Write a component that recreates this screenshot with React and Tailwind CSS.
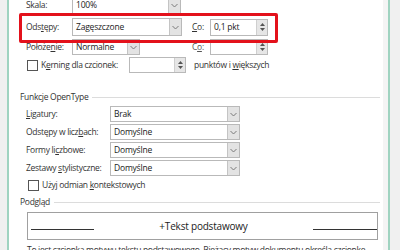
import React from "react";

const font = { fontFamily: "'Open Sans', 'Noto Sans', sans-serif" };

function U({ children }) {
  return <span className="underline underline-offset-1">{children}</span>;
}

function Chevron() {
  return (
    <svg width="7" height="5" viewBox="0 0 7 5" className="text-[#7a7a7a]">
      <path d="M0.5 1 L3.5 4 L6.5 1" fill="none" stroke="currentColor" strokeWidth="1" />
    </svg>
  );
}

function Dropdown({ value, className }) {
  return (
    <div className={`flex shrink-0 border border-[#b9b9b9] bg-white ${className}`}>
      <div className="flex-1 pl-[3px] text-[8.5px] leading-none text-[#222] flex items-center whitespace-nowrap tracking-[-0.2px]">{value}</div>
      <div className="w-[12px] bg-[#e3e3e3] border-l border-[#c4c4c4] flex items-center justify-center">
        <Chevron />
      </div>
    </div>
  );
}

function Spinner({ value, className }) {
  return (
    <div className={`flex shrink-0 border border-[#b9b9b9] bg-white ${className}`}>
      <div className="flex-1 pl-[3px] text-[8.5px] leading-none text-[#222] flex items-center whitespace-nowrap tracking-[-0.2px]">{value}</div>
      <div className="w-[11px] bg-[#e6e6e6] border-l border-[#cfcfcf] flex flex-col items-center justify-center gap-[2px]">
        <svg width="5" height="3" viewBox="0 0 5 3"><path d="M2.5 0 L5 3 L0 3 Z" fill="#555" /></svg>
        <svg width="5" height="3" viewBox="0 0 5 3"><path d="M0 0 L5 0 L2.5 3 Z" fill="#555" /></svg>
      </div>
    </div>
  );
}

function Checkbox() {
  return <div className="w-[11px] h-[11px] border border-[#555] bg-white shrink-0" />;
}

function GroupTitle({ children }) {
  return (
    <div className="flex items-center gap-[4px] pl-[11px] pr-[3px] h-[9px]">
      <span className="text-[8.5px] text-[#333] leading-none whitespace-nowrap tracking-[-0.3px]">{children}</span>
      <div className="flex-1 h-px bg-[#dcdcdc]" />
    </div>
  );
}

const label = "shrink-0 text-[8.5px] leading-none whitespace-nowrap tracking-[-0.3px]";

export default function App() {
  return (
    <div className="w-[400px] h-[250px] overflow-hidden flex bg-[#f0f0f0]" style={font}>
      <div className="w-[7px] shrink-0" />
      <div className="w-[2px] shrink-0 bg-[#9fd3c0]" />
      <div className="relative w-[374px] shrink-0 bg-white text-[#333]">
        {/* top group */}
        <div className="mt-[-3px] pl-[17px]">
          <div className="flex items-center h-[17px]">
            <span className={`w-[46px] ${label}`}>Skala:</span>
            <Dropdown value="100%" className="w-[109px] h-[17px]" />
          </div>
          <div className="flex items-center h-[18px] mt-[4px]">
            <span className={`w-[46px] ${label}`}>Ods<U>t</U>ępy:</span>
            <Dropdown value="Zagęszczone" className="w-[110px] h-[18px]" />
            <span className={`ml-[10px] w-[18px] ${label}`}><U>C</U>o:</span>
            <Spinner value="0,1 pkt" className="w-[58px] h-[17px]" />
          </div>
          <div className="flex items-center h-[16px] mt-[3px]">
            <span className={`w-[46px] ${label}`}>Położe<U>n</U>ie:</span>
            <Dropdown value="Normalne" className="w-[68px] h-[16px]" />
            <span className={`ml-[52px] w-[18px] text-[#555] ${label}`}>C<U>o</U>:</span>
            <Spinner value="" className="w-[58px] h-[16px]" />
          </div>
          <div className="flex items-center h-[16px] mt-[2px] pl-[1px]">
            <Checkbox />
            <span className={`ml-[3px] w-[88px] ${label}`}>K<U>e</U>rning dla czcionek:</span>
            <Spinner value="" className="w-[57px] h-[16px]" />
            <span className={`ml-[8px] ${label}`}>punktów i <U>w</U>iększych</span>
          </div>
        </div>

        {/* OpenType group */}
        <div className="mt-[20px]">
          <GroupTitle>Funkcje OpenType</GroupTitle>
          <div className="pl-[17px] mt-[4px] flex flex-col gap-[2px]">
            {[
              [<><U>L</U>igatury:</>, "Brak"],
              [<>Odstępy w licz<U>b</U>ach:</>, "Domyślne"],
              [<>Formy li<U>c</U>zbowe:</>, "Domyślne"],
              [<>Zestawy <U>s</U>tylistyczne:</>, "Domyślne"],
            ].map(([text, value], i) => (
              <div key={i} className="flex items-center h-[16px]">
                <span className={`w-[84px] ${label}`}>{text}</span>
                <Dropdown value={value} className="w-[130px] h-[16px]" />
              </div>
            ))}
            <div className="flex items-center h-[12px] mt-[1px] pl-[2px]">
              <Checkbox />
              <span className={`ml-[3px] ${label}`}>Użyj odmian <U>k</U>ontekstowych</span>
            </div>
          </div>
        </div>

        {/* preview group */}
        <div className="mt-[7px]">
          <GroupTitle>Podgląd</GroupTitle>
          <div className="ml-[18px] mr-[5px] mt-[5px] h-[28px] border border-[#a0a0a0] flex items-center">
            <div className="w-[63px] h-px bg-[#333] ml-[3px] mt-[6px]" />
            <div className="flex-1 text-center text-[10px] leading-none text-[#222] whitespace-nowrap tracking-[-0.2px]">+Tekst podstawowy</div>
            <div className="w-[64px] h-px bg-[#333] mt-[7px]" />
          </div>
          <div className="ml-[18px] mt-[6px] text-[8.5px] leading-none text-[#333] whitespace-nowrap tracking-[-0.3px]">
            To jest czcionka motywu tekstu podstawowego. Bieżący motyw dokumentu określa czcionkę
          </div>
        </div>

        {/* red annotation */}
        <div className="absolute left-[10px] top-[13px] w-[259px] h-[30px] border-[3px] border-[#e3111b] rounded-[2px]" />
      </div>
      <div className="w-[5px] shrink-0 bg-[#f4f4f4]" />
      <div className="w-[2px] shrink-0 bg-[#9fd3c0]" />
      <div className="flex-1" />
    </div>
  );
}
